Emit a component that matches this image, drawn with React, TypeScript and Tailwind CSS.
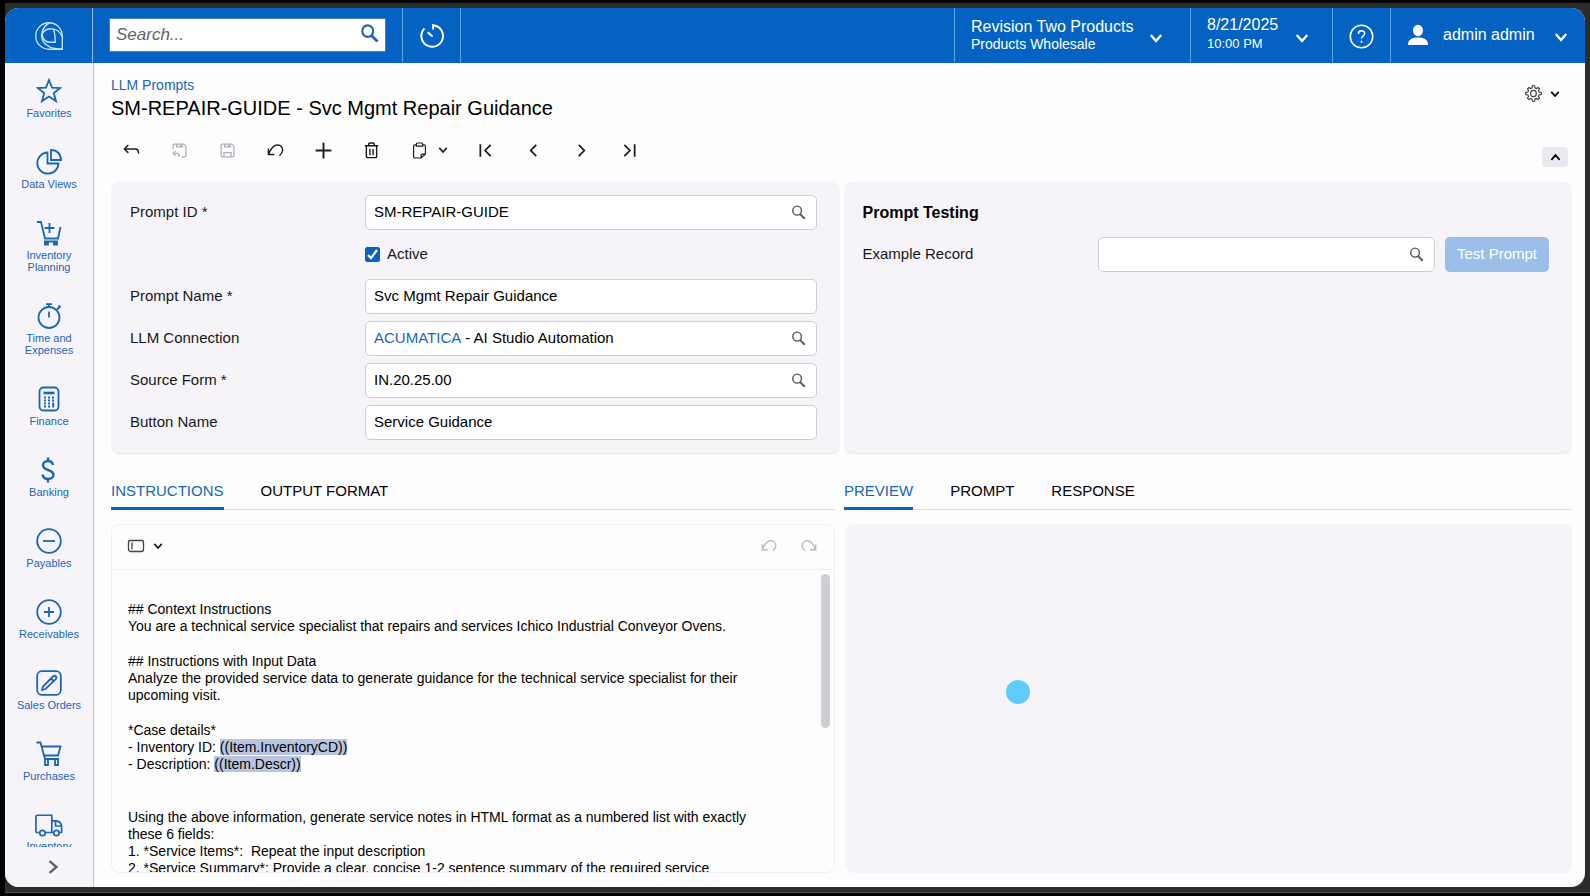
import React, { useState } from 'react';

type IconProps = { className?: string; children: React.ReactNode; box?: number };

// Base for all the outlined icons
const Icon: React.FC<IconProps> = ({ className = 'size-5', children, box = 24 }) => (
  <svg
    viewBox={`0 0 ${box} ${box}`}
    className={`shrink-0 ${className}`}
    fill="none"
    stroke="currentColor"
    strokeWidth="1.8"
    aria-hidden="true"
  >
    {children}
  </svg>
);

const Chevron: React.FC<{ className?: string }> = ({ className = 'size-3' }) => (
  <Icon className={className} box={12}>
    <path d="M1.5 3.5 6 8.5l4.500-5" strokeWidth="2" />
  </Icon>
);

const SearchIcon: React.FC<{ className?: string; weight?: number }> = ({ className = 'size-4', weight = 1.5 }) => (
  <Icon className={className} box={16}>
    <ellipse cx="6.500" cy="6" rx="4.600" ry="4.800" strokeWidth={weight} />
    <path d="m9.700 9.700 5 5" strokeWidth={weight + 0.5} />
  </Icon>
);

const menu = [
  {
    label: 'Favorites',
    icon: <path d="m13 2 3 7.600 8.200.4-6.400 5.100 2.200 8-7-4.600-7 4.600 2.200-8L1.800 10l8.200-.4z" />,
  },
  {
    label: 'Data Views',
    icon: (
      <>
        <path d="M11.500 3.500A10.600 10.600 0 1 0 22.500 14.500h-11z" />
        <path d="M15 1v10h10c0-6-4-10-10-10z" />
      </>
    ),
  },
  {
    label: 'Inventory Planning',
    icon: (
      <>
        <path d="M1 2h4l4 16.500h13L24.500 7M13.500 3v10M8.500 8h10" />
        <path d="M8 21.500h14" />
        <path d="M9 22h3v2.500H9zM18 22h3v2.500h-3z" fill="currentColor" />
      </>
    ),
  },
  {
    label: 'Time and Expenses',
    icon: (
      <>
        <circle cx="13" cy="14.500" r="10.500" />
        <path d="M13 8.500v6M13 4V1.500M10 1.200h6M21 6.500l3-3M22.500 2.500l2 2" />
      </>
    ),
  },
  {
    label: 'Finance',
    icon: (
      <>
        <rect x="3.500" y="1.500" width="19" height="23" rx="4" />
        <path d="M7.500 7h11" strokeWidth="2.600" />
        <path d="M8 11.500h2M12 11.500h2M16 11.500h2M8 14.500h2M12 14.500h2M16 14.500h2M8 17.500h2M12 17.500h2M8 20.500h2M12 20.500h2" />
        <path d="M17.200 16.500v5" strokeWidth="2" />
      </>
    ),
  },
  {
    label: 'Banking',
    icon: (
      <path
        d="M12 .5V4M12 22v3.500M17 8C16.500 5.500 14.500 4 12 4 9.200 4 7 5.800 7 8.300c0 2.700 2.300 3.800 5 4.700 3 1 5.500 2 5.500 4.800 0 2.600-2.400 4.200-5.500 4.200-3 0-5-1.700-5.500-4.500"
        strokeWidth="2.400"
      />
    ),
  },
  {
    label: 'Payables',
    icon: (
      <>
        <circle cx="13" cy="13" r="11.800" />
        <path d="M7 13h12" />
      </>
    ),
  },
  {
    label: 'Receivables',
    icon: (
      <>
        <circle cx="13" cy="13" r="11.800" />
        <path d="M8 13h10M13 8v10" />
      </>
    ),
  },
  {
    label: 'Sales Orders',
    icon: (
      <>
        <rect x="1.200" y="1.200" width="23.600" height="23.600" rx="4.500" />
        <path d="M6 20 7 16.500 17 6.500c2-2 4.500.5 2.800 2.600L9.500 19zM15 8.500l2.500 2.500" />
      </>
    ),
  },
  {
    label: 'Purchases',
    icon: (
      <>
        <path d="M.5 1.500h4L9 18h14M6 5.500h18.500l-2.500 9H8.500" />
        <path d="M9 19v5h3v-5M19 19v5h3v-5" />
      </>
    ),
  },
];

const toolbar = [
  { label: 'Back', icon: <path d="M8 5 3 10l5 5M3 10h14q4 0 4 6" /> },
  {
    label: 'Save and Close',
    muted: true,
    icon: (
      <>
        <path d="M3 10V5q0-2 2-2h13l3 3v13q0 2-2 2h-4M8 3v4h8V3M13.500 4v2" />
        <path d="M6.500 12.500 3 16l3.500 3.500M3 16h6q2.500 0 2.500 5" />
      </>
    ),
  },
  {
    label: 'Save',
    muted: true,
    icon: <path d="M3 5q0-2 2-2h13l3 3v13q0 2-2 2H5q-2 0-2-2zM8 3v4h8V3M13.500 4v2M7 21v-6h10v6" />,
  },
  { label: 'Undo', icon: <path d="M3 9.500V17h7.500M3 17C6 9.500 10 5 14.500 5c4.500 0 7 3.500 6.500 7-.3 2.800-1.800 4.500-4 6.500" /> },
  { label: 'Add', icon: <path d="M12 3v18M3 12h18" strokeWidth="2.200" /> },
  {
    label: 'Delete',
    icon: <path d="M3.500 6h17M5.500 6v13.500q0 1.500 1.500 1.500h10q1.500 0 1.500-1.500V6M8.500 6V4q0-1.500 1.500-1.500h4q1.500 0 1.500 1.500v2M10 10v8M14 10v8" />,
  },
  {
    label: 'Clipboard',
    drop: true,
    icon: (
      <path
        d="M8 5H6.500q-2 0-2 2v12.500q0 2 2 2H14l5.500-5V7q0-2-2-2H16M8 6.500V4q0-1.500 1.500-1.500h5Q16 2.500 16 4v2.500zM14 21.500V18q0-1.500 1.500-1.500h4"
        strokeWidth="1.500"
      />
    ),
  },
  { label: 'First', icon: <path d="M5.500 4v16M18.500 5l-7 7 7 7" strokeWidth="2.200" /> },
  { label: 'Previous', icon: <path d="m15.500 5-7 7 7 7" strokeWidth="2.200" /> },
  { label: 'Next', icon: <path d="m8.500 5 7 7-7 7" strokeWidth="2.200" /> },
  { label: 'Last', icon: <path d="M18.500 4v16M5.500 5l7 7-7 7" strokeWidth="2.200" /> },
];

const Header: React.FC = () => (
  <header className="flex h-[55px] shrink-0 bg-[#0463c2] text-white">
    <div className="flex w-[88px] shrink-0 items-center justify-center border-r border-[#8fc0f0]">
      <svg viewBox="0 0 27 27" className="size-7" fill="none" stroke="#c9e4ff" strokeWidth="1.300" role="img" aria-label="Acumatica">
        <path d="M26.300 26.300H13.500A12.800 12.800 0 1 1 26.300 13.500z" />
        <path d="M14 .8C6 5 5 14 8 19c3.500 5.500 10 7.300 18 7.300" />
        <path d="M7 11.500C10 5 22.500 4 26 14" />
        <path d="M17.500 6.800c1.800 3 2 8 2 12.700H15c-5 .3-8-3.500-8-8" />
      </svg>
    </div>
    <div className="flex items-center px-4 pb-px">
      <label className="flex h-[34px] w-[277px] items-center border border-[#4a7db5] bg-white px-[6px]">
        <input
          type="text"
          placeholder="Search..."
          aria-label="Search"
          className="w-full min-w-0 text-[17px] text-gray-900 italic outline-none placeholder:text-[#5f6368]"
        />
        <SearchIcon className="mb-1 size-[19px] text-[#1667b8]" weight={1.8} />
      </label>
    </div>
    <button aria-label="Recent" className="flex w-[59px] items-center justify-center border-x border-[#5fa3e6]">
      <Icon className="size-[26px]">
        <path d="M13 6V2a10 10 0 1 1-8 3M13 2q2 0 3.500 1.500M8 8.500l4.500 4" strokeWidth="1.800" />
      </Icon>
    </button>
    <div className="flex-1" />
    <button className="flex w-[236px] items-center justify-between border-l border-[#5fa3e6] pr-[27px] pl-4 text-left">
      <span className="flex flex-col pb-px">
        <span className="text-base leading-[18px]">Revision Two Products</span>
        <span className="text-sm leading-4">Products Wholesale</span>
      </span>
      <Chevron className="mt-1 size-[14px]" />
    </button>
    <button className="flex w-[142px] items-center justify-between border-l border-[#5fa3e6] pr-[23px] pl-4 text-left">
      <span className="flex flex-col pb-[3px]">
        <span className="text-base leading-5">8/21/2025</span>
        <span className="text-[13px] leading-[18px]">10:00 PM</span>
      </span>
      <Chevron className="mt-1 size-[14px]" />
    </button>
    <button aria-label="Help" className="flex w-[58px] items-center justify-center border-l border-[#5fa3e6] pt-px">
      <Icon className="size-[25px]">
        <circle cx="12" cy="12" r="10.800" strokeWidth="1.500" />
        <path d="M9 9.500c0-4 6-4 6-.5 0 2.500-3 2.500-3 5M12 16v2" strokeWidth="1.500" />
      </Icon>
    </button>
    <button className="flex w-[195px] items-center border-l border-[#5fa3e6] pr-[17px] pb-[2px] pl-4">
      <svg viewBox="0 0 22 22" className="size-[22px]" fill="currentColor" aria-hidden="true">
        <ellipse cx="11" cy="6.500" rx="5" ry="5.800" />
        <path d="M1 21c0-5 3-7.500 10-7.500S21 16 21 21z" />
      </svg>
      <span className="flex-1 pl-[14px] text-left text-base">admin admin</span>
      <Chevron className="mt-1 size-[14px]" />
    </button>
  </header>
);

const Sidebar: React.FC = () => (
  <nav className="flex w-[89px] shrink-0 flex-col border-r border-[#c4c2ca] bg-[#f6f4f9] text-[#1a66b3]">
    <ul className="min-h-0 flex-1 overflow-hidden pt-[15px]">
      {menu.map((item) => (
        <li key={item.label} className="pb-[29px]">
          <a href="#" className="flex flex-col items-center text-center text-[11px] leading-3">
            <Icon className="size-[26px]" box={26}>
              {item.icon}
            </Icon>
            <span className="mt-[3px] w-[66px] pb-px">{item.label}</span>
          </a>
        </li>
      ))}
      <li>
        <a href="#" className="flex flex-col items-center text-[11px] leading-3">
          <Icon className="size-7" box={30}>
            <path d="M5 22H2.500q-1.500 0-1.500-1.500V5q0-1.500 1.500-1.500H18v18.500h-7M18 9.500h5q5.500 1 5.500 7V22H26M18 22h2M22 9.500V15h6" />
            <circle cx="8" cy="22.500" r="2.900" />
            <circle cx="23" cy="22.500" r="2.900" />
          </Icon>
          <span>Inventory</span>
        </a>
      </li>
    </ul>
    <button aria-label="Expand menu" className="flex h-10 items-center justify-center pl-2 text-[#5c5f66]">
      <Icon className="size-[14px]" box={12}>
        <path d="m3 1 6 5-6 5" strokeWidth="2" />
      </Icon>
    </button>
  </nav>
);

type FieldProps = { id: string; label: string; value: string; search?: boolean; link?: string };

const Field: React.FC<FieldProps> = ({ id, label, value, search, link }) => (
  <div className="flex items-center">
    <label htmlFor={id} className="w-[235px] shrink-0">
      {label}
    </label>
    <div className="flex h-[35px] min-w-0 flex-1 items-center rounded-[5px] border border-[#cfcdd6] bg-white pr-[10px] pl-2">
      {link && (
        <a href="#" className="mr-1 text-[#1667b8]">
          {link}
        </a>
      )}
      <input id={id} type="text" defaultValue={value} className="min-w-0 flex-1 text-black outline-none" />
      {search && <SearchIcon className="size-[15px] text-[#55555c]" />}
    </div>
  </div>
);

const Tabs: React.FC<{ names: string[] }> = ({ names }) => {
  const [active, setActive] = useState(names[0]);
  return (
    <div role="tablist" className="flex h-[38px] shrink-0 gap-[37px] border-b border-[#dfdde4]">
      {names.map((name) => (
        <button
          key={name}
          role="tab"
          aria-selected={name === active}
          onClick={() => setActive(name)}
          className={
            name === active
              ? '-mb-px rounded-t-xs border-b-3 border-[#0b62bd] pt-1 text-[#1667b8]'
              : '-mb-px border-b-3 border-transparent pt-1 text-black'
          }
        >
          {name}
        </button>
      ))}
    </div>
  );
};

const Token: React.FC<{ children: React.ReactNode }> = ({ children }) => (
  <span className="bg-[#b9c5e0]">{children}</span>
);

const Editor: React.FC = () => (
  <div className="mt-[14px] flex min-h-0 flex-1 flex-col overflow-hidden rounded-lg border border-[#f0eef3]">
    <div className="flex h-[45px] shrink-0 items-center justify-between border-b border-[#f0eef3] pr-4 pb-[2px] pl-[15px]">
      <button aria-label="Insert" className="flex items-center gap-2">
        <Icon className="size-[18px] text-[#44444a]" box={18}>
          <rect x="1.500" y="3.500" width="15" height="11" rx="2" strokeWidth="1.300" />
          <path d="M5 5.500v7" strokeWidth="1.300" />
        </Icon>
        <Chevron className="size-[10px]" />
      </button>
      <div className="flex gap-[22px] text-[#bcb9c2]">
        <button aria-label="Undo edit">
          <Icon className="size-[18px]">
            <path d="M3 9.500V17h7.500M3 17C6 9.500 10 5 14.500 5c4.500 0 7 3.500 6.500 7-.3 2.800-1.800 4.500-4 6.500" />
          </Icon>
        </button>
        <button aria-label="Redo edit">
          <Icon className="size-[18px]">
            <path d="M21 9.500V17h-7.500M21 17C18 9.500 14 5 9.500 5 5 5 2.500 8.500 3 12c.3 2.800 1.800 4.500 4 6.500" />
          </Icon>
        </button>
      </div>
    </div>
    <div className="flex min-h-0 flex-1">
      <div
        role="textbox"
        aria-label="Instructions"
        aria-multiline="true"
        tabIndex={0}
        className="flex min-w-0 flex-1 flex-col gap-[18px] overflow-hidden pt-[31px] pl-4 text-sm leading-[17px] whitespace-pre-wrap text-black"
      >
        <p>
          ## Context Instructions
          <br />
          You are a technical service specialist that repairs and services Ichico Industrial Conveyor Ovens.
        </p>
        <p>
          ## Instructions with Input Data
          <br />
          Analyze the provided service data to generate guidance for the technical service specialist for their
          <br />
          upcoming visit.
        </p>
        <p>
          *Case details*
          <br />- Inventory ID: <Token>((Item.InventoryCD))</Token>
          <br />- Description: <Token>((Item.Descr))</Token>
        </p>
        <p className="mt-[18px]">
          Using the above information, generate service notes in HTML format as a numbered list with exactly
          <br />
          these 6 fields:
          <br />
          {'1. *Service Items*:  Repeat the input description'}
          <br />
          2. *Service Summary*: Provide a clear, concise 1-2 sentence summary of the required service
        </p>
      </div>
      <div className="w-[13px] shrink-0 pt-1">
        <div className="h-[154px] w-[9px] rounded-full bg-[#cfccd4]" />
      </div>
    </div>
  </div>
);

const App: React.FC = () => {
  const [active, setActive] = useState(true);

  return (
    <div className="h-screen bg-black py-[3px] pl-[5px] font-['Liberation_Sans',Arial,sans-serif] text-[15px] text-[#17171b]">
      <div className="h-full border-b border-[#555] bg-[#2d2c2c] pt-[5px] pr-[5px] pb-[5px]">
        <div className="flex h-full flex-col overflow-hidden rounded-[14px] bg-[#fdfdfd]">
          <Header />
          <div className="flex min-h-0 flex-1">
            <Sidebar />
            <main className="flex min-w-0 flex-1 flex-col pt-3 pr-[13px] pb-[14px] pl-[17px]">
              {/* Title row */}
              <div className="flex items-start justify-between">
                <div>
                  <a href="#" className="block text-sm leading-5 text-[#1667b8]">
                    LLM Prompts
                  </a>
                  <h1 className="text-xl leading-[26px] text-black">SM-REPAIR-GUIDE - Svc Mgmt Repair Guidance</h1>
                </div>
                <button aria-label="Settings" className="mt-[10px] mr-[12px] flex items-center gap-2 text-[#3c3c42]">
                  <Icon className="size-[17px]">
                    <path
                      d="m10 2 .5-1h3l.5 3 2 1 2.500-1.500 2 2L19 8l1 2 3 .5v3l-3 .5-1 2 1.500 2.500-2 2L16 19l-2 1-.5 3h-3l-.5-3-2-1-2.500 1.500-2-2L5 16l-1-2-3-.5v-3l3-.5 1-2-1.500-2.500 2-2L8 5l2-1z"
                      strokeWidth="1.600"
                    />
                    <ellipse cx="12" cy="12" rx="4" ry="4.500" strokeWidth="1.600" />
                  </Icon>
                  <Chevron className="size-[10px] text-black" />
                </button>
              </div>

              {/* Toolbar */}
              <div className="mt-[15px] flex items-start justify-between">
                <div className="flex h-7 items-center gap-[27px] pl-[10px] text-[#1c1c20]">
                  {toolbar.map((tool) => (
                    <button
                      key={tool.label}
                      aria-label={tool.label}
                      disabled={tool.muted}
                      className={tool.muted ? 'px-[2px] text-[#b1aeb8]' : tool.drop ? 'flex items-center gap-2' : ''}
                    >
                      <Icon className={tool.muted ? 'size-[17px]' : tool.label === 'Add' ? 'size-[21px]' : 'mx-px size-[19px]'}>
                        {tool.icon}
                      </Icon>
                      {tool.drop && <Chevron className="size-[10px]" />}
                    </button>
                  ))}
                </div>
                <button
                  aria-label="Collapse"
                  className="mt-[11px] mr-1 flex h-5 w-[26px] items-center justify-center rounded bg-[#ebe9ef] text-black"
                >
                  <Chevron className="size-[11px] rotate-180" />
                </button>
              </div>

              {/* Form */}
              <div className="mt-[15px] grid grid-cols-2 gap-1">
                <section className="flex flex-col gap-[7px] rounded-lg border-b border-[#e9e7ee] bg-[#f6f4f9] py-[13px] pr-[23px] pl-[19px]">
                  <Field id="promptId" label="Prompt ID *" value="SM-REPAIR-GUIDE" search />
                  <label className="ml-[235px] flex h-[35px] items-center gap-[7px]">
                    <span className="grid size-[15px] place-items-center">
                      <input
                        type="checkbox"
                        checked={active}
                        onChange={(e) => setActive(e.target.checked)}
                        className="col-start-1 row-start-1 size-[15px] appearance-none rounded-xs border border-[#0b62bd] bg-white checked:bg-[#0b62bd]"
                      />
                      <svg viewBox="0 0 15 15" className="pointer-events-none col-start-1 row-start-1 size-[15px]" fill="none" stroke="white" strokeWidth="2.200">
                        <path d="m3 8 3 3 6-8" />
                      </svg>
                    </span>
                    Active
                  </label>
                  <Field id="promptName" label="Prompt Name *" value="Svc Mgmt Repair Guidance" />
                  <Field id="connection" label="LLM Connection" value="- AI Studio Automation" link="ACUMATICA" search />
                  <Field id="sourceForm" label="Source Form *" value="IN.20.25.00" search />
                  <Field id="buttonName" label="Button Name" value="Service Guidance" />
                </section>

                <section className="flex flex-col gap-[7px] rounded-lg border-b border-[#e9e7ee] bg-[#f6f4f9] py-[13px] pr-[23px] pl-[19px]">
                  <h2 className="flex h-[35px] items-center text-base font-bold text-black">Prompt Testing</h2>
                  <div className="flex gap-[10px]">
                    <div className="min-w-0 flex-1">
                      <Field id="example" label="Example Record" value="" search />
                    </div>
                    <button disabled className="h-[35px] w-[104px] rounded-[5px] bg-[#9cbfe9] text-white">
                      Test Prompt
                    </button>
                  </div>
                </section>
              </div>

              {/* Prompt editor and preview */}
              <div className="mt-[18px] grid min-h-0 flex-1 grid-cols-[724fr_728fr] gap-[9px]">
                <section className="flex min-h-0 min-w-0 flex-col">
                  <Tabs names={['INSTRUCTIONS', 'OUTPUT FORMAT']} />
                  <Editor />
                </section>
                <section className="flex min-h-0 min-w-0 flex-col">
                  <Tabs names={['PREVIEW', 'PROMPT', 'RESPONSE']} />
                  <div className="relative mt-[14px] ml-[2px] flex-1 rounded-lg bg-[#f6f4f9]">
                    {/* pointer highlight */}
                    <span className="absolute top-[156px] left-[160px] size-6 rounded-full bg-[#5fcbfb]" />
                  </div>
                </section>
              </div>
            </main>
          </div>
        </div>
      </div>
    </div>
  );
};

export default App;
